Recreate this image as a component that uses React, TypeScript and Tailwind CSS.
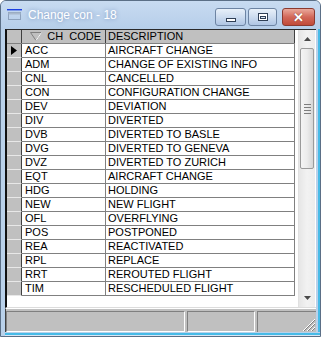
import React from "react";

const rows: [string, string][] = [
  ["ACC", "AIRCRAFT CHANGE"],
  ["ADM", "CHANGE OF EXISTING INFO"],
  ["CNL", "CANCELLED"],
  ["CON", "CONFIGURATION CHANGE"],
  ["DEV", "DEVIATION"],
  ["DIV", "DIVERTED"],
  ["DVB", "DIVERTED TO BASLE"],
  ["DVG", "DIVERTED TO GENEVA"],
  ["DVZ", "DIVERTED TO ZURICH"],
  ["EQT", "AIRCRAFT CHANGE"],
  ["HDG", "HOLDING"],
  ["NEW", "NEW FLIGHT"],
  ["OFL", "OVERFLYING"],
  ["POS", "POSTPONED"],
  ["REA", "REACTIVATED"],
  ["RPL", "REPLACE"],
  ["RRT", "REROUTED FLIGHT"],
  ["TIM", "RESCHEDULED FLIGHT"],
];

function TitleIcon() {
  return (
    <svg width="16" height="12" viewBox="0 0 16 12" className="shrink-0">
      <rect x="0" y="0" width="15" height="1.4" fill="#1a3fe0" />
      <rect x="1.5" y="3.5" width="12" height="7" fill="none" stroke="#8da2bd" strokeWidth="1" />
      <rect x="1.5" y="3.5" width="12" height="2" fill="#a8b8cc" />
    </svg>
  );
}

export default function App() {
  return (
    <div className="w-[321px] h-[337px] bg-white">
      <div className="w-[321px] h-[337px] flex flex-col border border-[#5b6f86] rounded-t-[6px] bg-[#b9d1ea] overflow-hidden font-['Liberation_Sans',Arial,sans-serif]">
        {/* title bar */}
        <div className="h-[28px] flex items-start bg-gradient-to-b from-[#c8dbf1] to-[#b6cee9] relative">
          <div className="mt-[8px] ml-[6px]">
            <TitleIcon />
          </div>
          <div className="mt-[6px] ml-[5px] text-[12px] leading-[16px] text-white [text-shadow:0_0_4px_rgba(110,140,185,1)]">
            Change con - 18
          </div>
          <div className="ml-auto mt-[7px] mr-[5px] flex items-start">
            <div className="w-[31px] h-[18px] rounded-[3px] border border-[#6d84a3] bg-gradient-to-b from-[#e8f0f9] via-[#cddcef] to-[#afc6e4] flex items-center justify-center">
              <div className="w-[10px] h-[4px] border border-[#2f3f55] bg-white mt-[5px]" />
            </div>
            <div className="w-[29px] h-[18px] ml-[2px] rounded-[3px] border border-[#6d84a3] bg-gradient-to-b from-[#e8f0f9] via-[#cddcef] to-[#afc6e4] flex items-center justify-center">
              <div className="w-[10px] h-[8px] border border-[#2f3f55] bg-white flex items-center justify-center">
                <div className="w-[6px] h-[3px] border border-[#2f3f55] bg-[#dbe6f4]" />
              </div>
            </div>
            <div className="w-[33px] h-[18px] ml-[5px] rounded-[3px] border border-[#8b3a30] bg-gradient-to-b from-[#e9a99c] via-[#d2685a] to-[#c04a38] flex items-center justify-center">
              <span className="text-white text-[13px] font-bold leading-none [text-shadow:0_0_1px_#5a1a10]">✕</span>
            </div>
          </div>
        </div>

        {/* body */}
        <div className="flex flex-col pl-[4px] pr-[0px] flex-1">
          <div className="flex flex-col border-r-[2px] border-[#47bbe7] pr-[2px] flex-1 border-b-0">
            {/* grid */}
            <div className="h-[279px] flex border-t border-l-2 border-t-[#2a2a2a] border-l-[#111] border-b border-b-[#dcdcdc] bg-white">
              <div className="w-[288px] flex flex-col text-[11px] leading-[13px] text-black">
                {/* header */}
                <div className="flex h-[14px] bg-[#c0c0c0] border-b border-[#808080]">
                  <div className="w-[15px] border-r border-[#404040] bg-[#c0c0c0]" />
                  <div className="w-[84px] border-r border-[#404040] flex items-center pr-[4px]">
                    <svg width="12" height="9" viewBox="0 0 12 9" className="ml-[8px]">
                      <path d="M0.5 0.5 L11.5 0.5 L6 8.5 Z" fill="#c0c0c0" stroke="#808080" strokeWidth="1" />
                      <path d="M11.5 0.5 L6 8.5" stroke="#ffffff" strokeWidth="1" />
                    </svg>
                    <span className="ml-auto whitespace-pre">CH  CODE</span>
                  </div>
                  <div className="w-[189px] border-r border-[#404040] pl-[2px] flex items-center">DESCRIPTION</div>
                </div>
                {rows.map(([code, desc], i) => (
                  <div key={code} className="flex h-[14px]">
                    <div className="w-[15px] bg-[#c0c0c0] border-r border-[#404040] border-b border-b-[#e8e8e8] flex items-center justify-center">
                      {i === 0 && (
                        <svg width="6" height="9" viewBox="0 0 6 9">
                          <path d="M0 0 L6 4.5 L0 9 Z" fill="#000" />
                        </svg>
                      )}
                    </div>
                    <div className="w-[84px] border-r border-b border-[#808080] pl-[3px] flex items-center">{code}</div>
                    <div className="w-[189px] border-r border-b border-[#808080] pl-[2px] flex items-center whitespace-nowrap">{desc}</div>
                  </div>
                ))}
              </div>
              <div className="w-[3px]" />
              {/* scrollbar */}
              <div className="w-[17px] flex flex-col bg-gradient-to-r from-[#e6e6e6] via-[#f2f2f2] to-[#ececec] border-l border-[#e0e0e0]">
                <div className="h-[18px] flex items-center justify-center">
                  <svg width="7" height="4" viewBox="0 0 7 4">
                    <path d="M0 4 L3.5 0 L7 4 Z" fill="#4a4a4a" />
                  </svg>
                </div>
                <div className="mx-[1px] h-[121px] rounded-[2px] border border-[#9a9a9a] bg-gradient-to-r from-[#f4f4f4] via-[#ececec] to-[#d6d6d6] flex flex-col items-center justify-center gap-[2px]">
                  <div className="w-[7px] h-[1px] bg-[#7d7d7d]" />
                  <div className="w-[7px] h-[1px] bg-[#7d7d7d]" />
                  <div className="w-[7px] h-[1px] bg-[#7d7d7d]" />
                  <div className="w-[7px] h-[1px] bg-[#7d7d7d]" />
                </div>
                <div className="flex-1" />
                <div className="h-[18px] flex items-center justify-center">
                  <svg width="7" height="4" viewBox="0 0 7 4">
                    <path d="M0 0 L3.5 4 L7 0 Z" fill="#4a4a4a" />
                  </svg>
                </div>
              </div>
            </div>
            {/* status bar */}
            <div className="h-[24px] bg-[#c0c0c0] border-t border-white flex items-stretch pt-[2px] border-l border-l-[#404040]">
              <div className="w-[179px] border-t border-l border-[#808080] border-r border-r-white border-b border-b-white" />
              <div className="w-[2px]" />
              <div className="w-[68px] border-t border-l border-[#808080] border-r border-r-white border-b border-b-white" />
              <div className="w-[2px]" />
              <div className="flex-1 border-t border-l border-[#808080] relative">
                <svg width="14" height="14" viewBox="0 0 14 14" className="absolute right-0 bottom-0">
                  <path d="M13 1 L1 13 M13 5 L5 13 M13 9 L9 13" stroke="#ffffff" strokeWidth="1" />
                  <path d="M13 2 L2 13 M13 6 L6 13 M13 10 L10 13" stroke="#808080" strokeWidth="1" />
                </svg>
              </div>
            </div>
          </div>
          <div className="h-[4px] flex flex-col">
            <div className="h-[1px] bg-[#b9d1ea]" />
            <div className="h-[2px] bg-[#47bbe7]" />
            <div className="h-[1px] bg-[#d8e6f4]" />
          </div>
        </div>
      </div>
    </div>
  );
}
